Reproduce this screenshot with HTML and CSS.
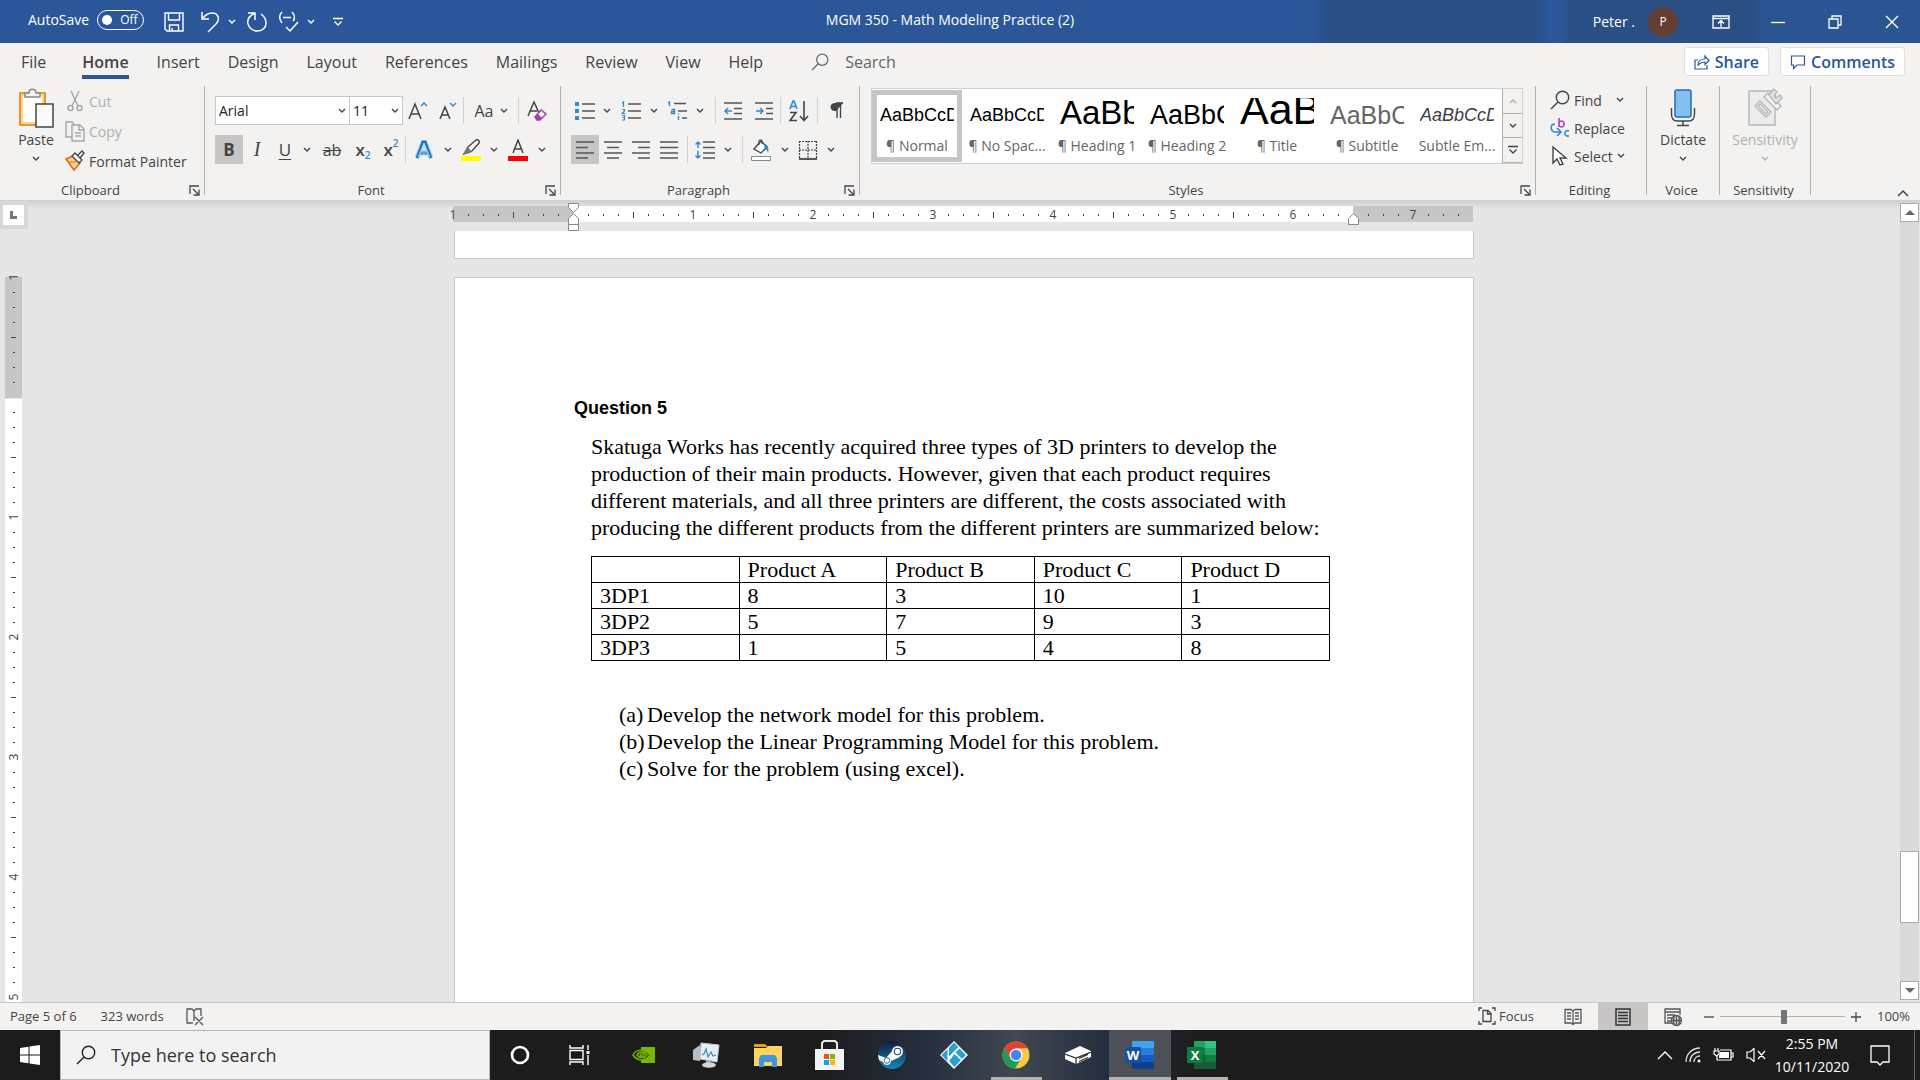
FILE: index.html
```html
<!DOCTYPE html>
<html lang="en">
<head>
<meta charset="utf-8">
<title>MGM 350 - Math Modeling Practice (2)</title>
<link rel="stylesheet" href="styles.css">
</head>
<body>
<svg class="defs" aria-hidden="true">
  <symbol id="chev" viewBox="0 0 8 6"><path d="M1 1l3 3 3-3" fill="none" stroke="currentColor" stroke-width="1.4"/></symbol>
  <symbol id="launch" viewBox="0 0 11 11"><path d="M1 9V1h9M4 4l5 5M10 4.500V10H4.500" fill="none" stroke="currentColor" stroke-width="1.300"/></symbol>
  <symbol id="lens" viewBox="0 0 20 20"><circle cx="12.500" cy="7.500" r="6.200" fill="none" stroke="currentColor" stroke-width="1.400"/><path d="M8 12L1 19" stroke="currentColor" stroke-width="1.400"/></symbol>
  <symbol id="more" viewBox="0 0 10 10"><path d="M0 1.500h10M1.500 4.500L5 8l3.500-3.500" fill="none" stroke="currentColor" stroke-width="1.300"/></symbol>
</svg>

<header class="titlebar">
  <div class="quick">
    <label class="autosave">AutoSave <span class="pill"><input type="checkbox" class="knob"><span>Off</span></span></label>
    <button class="qb save" aria-label="Save"><svg width="20" height="20" viewBox="0 0 20 20" fill="none" stroke="#fff" stroke-width="1.400"><path d="M1 1h18v18H3l-2-2zM4.500 1v7h11V1M5.500 19v-6h9v6M8 19v-3"/></svg></button>
    <button class="qb undo" aria-label="Undo"><svg width="20" height="22" viewBox="0 0 20 22" fill="none" stroke="#fff" stroke-width="1.500"><path d="M2 1v7h7M2 8C6 3 9 2 12 2c7 0 8 7 4 11l-8 8"/></svg><svg class="chev"><use href="#chev"/></svg></button>
    <button class="qb redo" aria-label="Repeat"><svg width="22" height="22" viewBox="0 0 22 22" fill="none" stroke="#fff" stroke-width="1.500"><path d="M2 2h7v7M9 2C3 5 1 9 2 13c3 10 18 9 18-1 0-4-2-7-5-9"/></svg></button>
    <button class="qb spell" aria-label="Spelling"><svg width="21" height="22" viewBox="0 0 21 22" fill="none" stroke="#fff" stroke-width="1.500"><path d="M4 1C1 4 1 8 4 12M5 6.500h8M14 1c3 3 3 7 1 9M8 16l4 4 8-9"/></svg><svg class="chev"><use href="#chev"/></svg></button>
    <button class="qb" aria-label="Customize toolbar"><svg width="10" height="10"><use href="#more"/></svg></button>
  </div>
  <div class="doc-title">MGM 350 - Math Modeling Practice (2)</div>
  <div class="account">
    <span>Peter .</span><span class="avatar">P</span>
    <button class="wb" aria-label="Ribbon display options"><svg width="18" height="14" viewBox="0 0 18 14" fill="none" stroke="#fff" stroke-width="1.300"><path d="M1 1h16v12H1zM1 3.500h16M9 12V6M6 8.500l3-3 3 3"/></svg></button>
    <button class="wb" aria-label="Minimize"><svg width="14" height="14"><path d="M0 7.500h14" stroke="#fff" stroke-width="1.300"/></svg></button>
    <button class="wb" aria-label="Restore"><svg width="14" height="14" viewBox="0 0 14 14" fill="none" stroke="#fff" stroke-width="1.300"><path d="M1 4h9v9H1zM4 4V1h9v9h-3"/></svg></button>
    <button class="wb" aria-label="Close"><svg width="14" height="14" viewBox="0 0 14 14" stroke="#fff" stroke-width="1.400"><path d="M1 1l12 12M13 1L1 13"/></svg></button>
  </div>
</header>

<nav class="tabs">
  <a href="#file" class="file">File</a>
  <a href="#home" class="on">Home</a>
  <a href="#insert">Insert</a>
  <a href="#design">Design</a>
  <a href="#layout">Layout</a>
  <a href="#references">References</a>
  <a href="#mailings">Mailings</a>
  <a href="#review">Review</a>
  <a href="#view">View</a>
  <a href="#help">Help</a>
  <label class="tell"><svg width="18" height="18"><use href="#lens"/></svg><input type="text" placeholder="Search" aria-label="Search"></label>
  <button class="pillbtn"><svg width="16" height="16" viewBox="0 0 16 16" fill="none" stroke="currentColor" stroke-width="1.200"><path d="M4 6H1v9h12v-4M4 11c0-4 3-6 7-6V2l4 4.500-4 4V8C8 8 6 9 4 11z"/></svg>Share</button>
  <button class="pillbtn"><svg width="16" height="16" viewBox="0 0 16 16" fill="none" stroke="currentColor" stroke-width="1.200"><path d="M1.500 2h13v9H7l-3.500 3.500V11h-2z"/></svg>Comments</button>
</nav>

<section class="ribbon" aria-label="Home tools">
  <div class="group clipboard">
    <div class="body">
      <button class="big"><svg width="36" height="40" viewBox="0 0 36 40"><path d="M2 5h25v32H2z" fill="#fcd58a" stroke="#e67e14" stroke-width="1.600"/><path d="M5 8h19v26H5z" fill="#fff"/><path d="M7 9V5h4c0-5 7-5 7 0h4v4z" fill="#f3f2f1" stroke="#8a8886" stroke-width="1.400"/><path d="M18 16h17v23H18z" fill="#fafafa" stroke="#444" stroke-width="1.500"/></svg>Paste<svg class="chev"><use href="#chev"/></svg></button>
      <div class="stack">
        <button class="row off"><svg width="20" height="22" viewBox="0 0 20 22" fill="none" stroke="#a6a6a6" stroke-width="1.400"><path d="M6 1l7 15M14 1L7 16"/><circle cx="5.500" cy="18" r="2.500"/><circle cx="14.500" cy="18" r="2.500"/></svg>Cut</button>
        <button class="row off"><svg width="20" height="22" viewBox="0 0 20 22" fill="none" stroke="#a6a6a6" stroke-width="1.400"><path d="M7 17H1V2h6l3 3M7 5h8l4 4v12H7zM14 5v5h5M10 13h6M10 16h6"/></svg>Copy</button>
        <button class="row"><svg width="20" height="22" viewBox="0 0 20 22"><path d="M1 9l7-3 7 7-6 7z" fill="#fcd58a" stroke="#e0661a" stroke-width="1.500"/><path d="M3 12l8 0" stroke="#e0661a"/><path d="M7 6l3-3 7 7-3 3zM13 5l4-4 2 2-4 5" fill="#fff" stroke="#444" stroke-width="1.400"/></svg>Format Painter</button>
      </div>
    </div>
    <div class="cap"><span>Clipboard</span><button aria-label="Clipboard options"><svg width="11" height="11"><use href="#launch"/></svg></button></div>
  </div>

  <div class="group font">
    <div class="body lines">
      <div class="line">
        <span class="combo name"><select aria-label="Font"><option>Arial</option></select><svg class="chev"><use href="#chev"/></svg></span>
        <span class="combo size"><select aria-label="Font size"><option>11</option></select><svg class="chev"><use href="#chev"/></svg></span>
        <button class="ib w30" aria-label="Grow font"><svg width="20" height="20" viewBox="0 0 20 20" fill="none" stroke="#444" stroke-width="1.500"><path d="M1 18L7 3l6 15M3 13h8"/><path d="M13 5l3-3 3 3" stroke="#2b8dd6"/></svg></button>
        <button class="ib w30" aria-label="Shrink font"><svg width="18" height="20" viewBox="0 0 18 20" fill="none" stroke="#444" stroke-width="1.500"><path d="M1 18L6 6l5 12M3 14h6"/><path d="M11 2l3 3 3-3" stroke="#2b8dd6"/></svg></button>
        <i class="sep"></i>
        <button class="ib w54 case" aria-label="Change case">Aa<svg class="chev"><use href="#chev"/></svg></button>
        <i class="sep"></i>
        <button class="ib w36" aria-label="Clear formatting"><svg width="20" height="20" viewBox="0 0 20 20" fill="none" stroke="#444" stroke-width="1.500"><path d="M1 15L7 1l5 11M3 10h7"/><path d="M8 16l6-7 5 4-6 6h-3z" fill="#f3f2f1" stroke="#a33fae"/><path d="M8 16l3-3 4 4-2 2h-3z" fill="#a33fae" stroke="none"/></svg></button>
      </div>
      <div class="line">
        <button class="ib w28 pressed b">B</button>
        <button class="ib w28 it">I</button>
        <button class="ib w28 un">U</button>
        <button class="ib w16" aria-label="Underline style"><svg class="chev"><use href="#chev"/></svg></button>
        <button class="ib w34 st">ab</button>
        <button class="ib w28 sb">x<sub>2</sub></button>
        <button class="ib w28 sb">x<sup>2</sup></button>
        <i class="sep"></i>
        <button class="ib w36" aria-label="Text effects"><svg width="20" height="20" viewBox="0 0 20 20" fill="none"><path d="M3 18L9 2h2l6 16M6 13h8" stroke="#9fd0f2" stroke-width="5"/><path d="M3 18L9 2h2l6 16M6 13h8" stroke="#1668b8" stroke-width="2.500"/><path d="M4 17L10 3l6 14M6 13h8" stroke="#fff" stroke-width=".7"/></svg></button>
        <button class="ib w12" aria-label="Effects menu"><svg class="chev"><use href="#chev"/></svg></button>
        <button class="ib w34" aria-label="Highlight"><svg width="20" height="22" viewBox="0 0 20 22"><path d="M3 15l4-7 8-7c2-1 4 1 3 3l-7 8z" fill="#fff" stroke="#444" stroke-width="1.400"/><path d="M2 15l5-7 4 5-5 2z" fill="#777"/><path d="M0 17h20v5H0z" fill="#ff0"/></svg></button>
        <button class="ib w12" aria-label="Highlight colors"><svg class="chev"><use href="#chev"/></svg></button>
        <button class="ib w36" aria-label="Font color"><svg width="20" height="22" viewBox="0 0 20 22"><path d="M5 14L10 1l5 13M6.500 10h7" fill="none" stroke="#444" stroke-width="1.500"/><path d="M0 17h20v5H0z" fill="#f00"/></svg></button>
        <button class="ib w12" aria-label="Font colors"><svg class="chev"><use href="#chev"/></svg></button>
      </div>
    </div>
    <div class="cap"><span>Font</span><button aria-label="Font options"><svg width="11" height="11"><use href="#launch"/></svg></button></div>
  </div>

  <div class="group para">
    <div class="body lines">
      <div class="line">
        <button class="ib w28" aria-label="Bullets"><svg width="20" height="20" viewBox="0 0 20 20"><path d="M0 1h4v4H0zM0 8h4v4H0zM0 15h4v4H0z" fill="#2b8dd6"/><path d="M7 3h13M7 10h13M7 17h13" stroke="#555" stroke-width="1.600"/></svg></button>
        <button class="ib w16" aria-label="Bullet library"><svg class="chev"><use href="#chev"/></svg></button>
        <button class="ib w32" aria-label="Numbering"><svg width="20" height="20" viewBox="0 0 20 20"><path d="M1 2l1.500-1v5M1 8.500h2.500v1.500L1 12.500h3M1 14.500h2.500v4.500H1M1.500 16.500h2" fill="none" stroke="#2b8dd6" stroke-width="1.200"/><path d="M7 3h13M7 10h13M7 17h13" stroke="#555" stroke-width="1.600"/></svg></button>
        <button class="ib w14" aria-label="Numbering library"><svg class="chev"><use href="#chev"/></svg></button>
        <button class="ib w32" aria-label="Multilevel list"><svg width="20" height="20" viewBox="0 0 20 20"><path d="M1 2l1.500-1v4M4.500 8.500h3v4h-3v-2h3M11.500 15v4M11.500 12.500v1" fill="none" stroke="#2b8dd6" stroke-width="1.400"/><path d="M7 2.500h12M11 10h9M15 17h5" stroke="#555" stroke-width="1.600"/></svg></button>
        <button class="ib w14" aria-label="List styles"><svg class="chev"><use href="#chev"/></svg></button>
        <i class="sep wide"></i>
        <button class="ib w32" aria-label="Decrease indent"><svg width="19" height="20" viewBox="0 0 19 20" fill="none"><path d="M1 2h18M11 7.500h8M11 12.500h8M1 18h18" stroke="#555" stroke-width="1.600"/><path d="M9 10H2M5 7l-3 3 3 3" stroke="#2b8dd6" stroke-width="1.500"/></svg></button>
        <button class="ib w32" aria-label="Increase indent"><svg width="19" height="20" viewBox="0 0 19 20" fill="none"><path d="M0 2h18M11 7.500h7M11 12.500h7M0 18h18" stroke="#555" stroke-width="1.600"/><path d="M1 10h7M5 7l3 3-3 3" stroke="#2b8dd6" stroke-width="1.500"/></svg></button>
        <i class="sep"></i>
        <button class="ib w36" aria-label="Sort"><svg width="20" height="22" viewBox="0 0 20 22" fill="none" stroke-width="1.600"><path d="M1 9l3-8h1l3 8M2 6.500h5" stroke="#2b8dd6"/><path d="M1 12.500h6l-6 8h7M15 1v19M11 16l4 4.500 4-4.500" stroke="#444"/></svg></button>
        <i class="sep"></i>
        <button class="ib w36" aria-label="Show paragraph marks"><svg width="13" height="17" viewBox="0 0 13 17"><path d="M13 1H5C-1 1-1 9 5 9h1" fill="#444"/><path d="M6 1h7M7 1v15M10.500 1v15" stroke="#444" stroke-width="1.400"/></svg></button>
      </div>
      <div class="line">
        <button class="ib w28 pressed" aria-label="Align left"><svg width="18" height="18"><path d="M0 1h18M0 6.500h12M0 12h18M0 17h12" stroke="#555" stroke-width="1.600"/></svg></button>
        <button class="ib w28" aria-label="Center"><svg width="18" height="18"><path d="M0 1h18M3 6.500h12M0 12h18M3 17h12" stroke="#555" stroke-width="1.600"/></svg></button>
        <button class="ib w28" aria-label="Align right"><svg width="18" height="18"><path d="M0 1h18M6 6.500h12M0 12h18M6 17h12" stroke="#555" stroke-width="1.600"/></svg></button>
        <button class="ib w28" aria-label="Justify"><svg width="18" height="18"><path d="M0 1h18M0 6.500h18M0 12h18M0 17h18" stroke="#555" stroke-width="1.600"/></svg></button>
        <i class="sep mid"></i>
        <button class="ib w34" aria-label="Line spacing"><svg width="20" height="20" viewBox="0 0 20 20" fill="none"><path d="M8 2h12M8 7.500h12M8 13h12M8 18h12" stroke="#555" stroke-width="1.600"/><path d="M3 8V2M.5 4.500L3 2l2.500 2.500M3 11v7M.5 15.500L3 18l2.500-2.500" stroke="#2b8dd6" stroke-width="1.500"/></svg></button>
        <button class="ib w12" aria-label="Spacing menu"><svg class="chev"><use href="#chev"/></svg></button>
        <i class="sep wide"></i>
        <button class="ib w36" aria-label="Shading"><svg width="20" height="22" viewBox="0 0 20 22"><path d="M3 10l7-8 6 6-6 6z" fill="#fff" stroke="#444" stroke-width="1.400"/><path d="M8 6V1h3v4" fill="none" stroke="#444"/><path d="M14 5c3 1 4 4 3 9-1-3-2-4-4-6z" fill="#2b8dd6"/><path d="M.5 17.500h19v4H.5z" fill="#fff" stroke="#888"/></svg></button>
        <button class="ib w12" aria-label="Shading colors"><svg class="chev"><use href="#chev"/></svg></button>
        <button class="ib w34" aria-label="Borders"><svg width="20" height="20" viewBox="0 0 20 20" fill="none" stroke="#444"><path d="M1.500 1v17M18.500 1v17M10 1v17M1 1.500h18M1 10h18" stroke-width="1.200" stroke-dasharray="2 1"/><path d="M1 19h18" stroke-width="1.800"/></svg></button>
        <button class="ib w12" aria-label="Border types"><svg class="chev"><use href="#chev"/></svg></button>
      </div>
    </div>
    <div class="cap"><span>Paragraph</span><button aria-label="Paragraph options"><svg width="11" height="11"><use href="#launch"/></svg></button></div>
  </div>

  <div class="group styles">
    <div class="body">
      <div class="gallery">
        <button class="style sel"><span class="smp">AaBbCcD</span><span class="nm">¶ Normal</span></button>
        <button class="style"><span class="smp">AaBbCcD</span><span class="nm">¶ No Spac...</span></button>
        <button class="style"><span class="smp h1">AaBb</span><span class="nm">¶ Heading 1</span></button>
        <button class="style"><span class="smp h2">AaBbC</span><span class="nm">¶ Heading 2</span></button>
        <button class="style"><span class="smp ti">AaB</span><span class="nm">¶ Title</span></button>
        <button class="style"><span class="smp su">AaBbC</span><span class="nm">¶ Subtitle</span></button>
        <button class="style"><span class="smp em">AaBbCcD</span><span class="nm">Subtle Em...</span></button>
        <div class="spin">
          <button class="dim" aria-label="Previous styles"><svg class="chev up"><use href="#chev"/></svg></button>
          <button aria-label="Next styles"><svg class="chev"><use href="#chev"/></svg></button>
          <button aria-label="More styles"><svg width="10" height="10"><use href="#more"/></svg></button>
        </div>
      </div>
    </div>
    <div class="cap"><span>Styles</span><button aria-label="Style options"><svg width="11" height="11"><use href="#launch"/></svg></button></div>
  </div>

  <div class="group editing">
    <div class="body stack">
      <button class="row"><svg width="20" height="20"><use href="#lens"/></svg>Find<svg class="chev far"><use href="#chev"/></svg></button>
      <button class="row"><svg width="20" height="22" viewBox="0 0 20 22" fill="none" stroke-width="1.600"><path d="M9 1v9M9 7c0-4 5-4 5 0s-5 4-5 0" stroke="#b146c2"/><path d="M5 7c-5 0-5 7 0 8h5M7 11l4 4-4 4M19 14c-5-2-6 6 0 5" stroke="#2b8dd6"/></svg>Replace</button>
      <button class="row"><svg width="20" height="22" viewBox="0 0 20 22"><path d="M3 2v16l4-4 3 6 3-1-3-6h6z" fill="#fff" stroke="#444" stroke-width="1.400"/></svg>Select<svg class="chev"><use href="#chev"/></svg></button>
    </div>
    <div class="cap"><span>Editing</span></div>
  </div>

  <div class="group voice">
    <div class="body">
      <button class="big"><svg width="26" height="40" viewBox="0 0 26 40"><rect x="5" y="2" width="16" height="27" rx="2" fill="#83beec" stroke="#1e6fb8" stroke-width="1.500"/><path d="M1.500 20v6c0 5 3 7 6 7h11c3 0 6-2 6-7v-6M13 33v4M7 37.500h12" fill="none" stroke="#444" stroke-width="1.400"/></svg>Dictate<svg class="chev"><use href="#chev"/></svg></button>
    </div>
    <div class="cap"><span>Voice</span></div>
  </div>

  <div class="group sens">
    <div class="body">
      <button class="big off"><svg width="36" height="40" viewBox="0 0 36 40" stroke="#b8b6b4" stroke-width="1.400"><path d="M2 3h26v34H2z" fill="#ececec"/><path d="M8 18l5-5 11 11-5 5z" fill="#f3f2f1"/><path d="M11 18l2-2 8 8-2 2zM17 9l4-4 13 13-4 4z" fill="#f3f2f1"/><path d="M22 7l5-6 3 3-3 4 2 2 4-3 2 3-6 6z" fill="#e4e4e4"/></svg>Sensitivity<svg class="chev"><use href="#chev"/></svg></button>
    </div>
    <div class="cap"><span>Sensitivity</span></div>
  </div>
  <button class="collapse" aria-label="Collapse ribbon"><svg width="12" height="8" viewBox="0 0 12 8"><path d="M1 7l5-5 5 5" fill="none" stroke="#444" stroke-width="1.500"/></svg></button>
</section>

<main class="work">
  <div class="left">
    <button class="tabstop" aria-label="Tab selector"><svg width="7" height="8"><path d="M0 0h3v5h4v3H0z" fill="#777"/></svg></button>
    <div class="vruler"><svg id="vr" width="17" height="727" aria-hidden="true"></svg></div>
  </div>
  <div class="center">
    <svg id="hr" class="hruler" width="1036" height="30" viewBox="0 1 1036 30" aria-hidden="true"></svg>
    <div class="view">
      <div class="page prev"></div>
      <article class="page">
        <h1>Question 5</h1>
        <div class="excerpt">
          <p>Skatuga Works has recently acquired three types of 3D printers to develop the production of their main products. However, given that each product requires different materials, and all three printers are different, the costs associated with producing the different products from the different printers are summarized below:</p>
          <table>
            <tr><th></th><th>Product A</th><th>Product B</th><th>Product C</th><th>Product D</th></tr>
            <tr><td>3DP1</td><td>8</td><td>3</td><td>10</td><td>1</td></tr>
            <tr><td>3DP2</td><td>5</td><td>7</td><td>9</td><td>3</td></tr>
            <tr><td>3DP3</td><td>1</td><td>5</td><td>4</td><td>8</td></tr>
          </table>
          <ul>
            <li><span>(a)</span>Develop the network model for this problem.</li>
            <li><span>(b)</span>Develop the Linear Programming Model for this problem.</li>
            <li><span>(c)</span>Solve for the problem (using excel).</li>
          </ul>
        </div>
      </article>
    </div>
  </div>
  <div class="scroll">
    <button aria-label="Scroll up"><svg width="10" height="5"><path d="M0 5l5-5 5 5z" fill="#666"/></svg></button>
    <div class="track"><div class="thumb"></div></div>
    <button aria-label="Scroll down"><svg width="10" height="5"><path d="M0 0l5 5 5-5z" fill="#666"/></svg></button>
  </div>
</main>

<footer class="status">
  <span class="pages">Page 5 of 6</span><span class="words">323 words</span>
  <svg width="18" height="18" viewBox="0 0 18 18" fill="none" stroke="#555" stroke-width="1.300"><path d="M7 15H1V1h5l2 2v10M8 3l2-2h5v7M9 9l8 8M17 9l-8 8"/></svg>
  <button class="focus"><svg width="18" height="18" viewBox="0 0 18 18" fill="none" stroke="#444" stroke-width="1.300"><path d="M4 1H1v3M1 14v3h3M14 1h3v3M17 14v3h-3M5 3.500h5l3 3v8H5zM9.500 3.500v3.500H13"/></svg>Focus</button>
  <button class="vb" aria-label="Read mode"><svg width="18" height="18" viewBox="0 0 18 18" fill="none" stroke="#555" stroke-width="1.300"><path d="M9 3L7 1.500H1V15h6l2 1.500L11 15h6V1.500h-6zM9 3v13M3 5h4M3 8h4M3 11h4M11 5h4M11 8h4M11 11h4"/></svg></button>
  <button class="vb pressed" aria-label="Print layout"><svg width="16" height="18" viewBox="0 0 16 18" fill="none" stroke="#333" stroke-width="1.500"><path d="M1 1h14v16H1zM3 4.500h10M3 7.500h10M3 10.500h10M3 13.500h10"/></svg></button>
  <button class="vb" aria-label="Web layout"><svg width="18" height="18" viewBox="0 0 18 18" fill="none" stroke="#555" stroke-width="1.300"><path d="M8 15H1V1h15v6M1 4h15M3 7h8M3 10h5M3 13h4"/><circle cx="12.500" cy="12.500" r="5" fill="#ddd"/><path d="M7.500 12.500h10M12.500 7.500v10M10.500 8.500c-1.500 3-1.500 5 0 8M14.500 8.500c1.500 3 1.500 5 0 8"/></svg></button>
  <button class="zb" aria-label="Zoom out"><svg width="10" height="10"><path d="M0 5h10" stroke="#444" stroke-width="1.300"/></svg></button>
  <input type="range" class="zoom" min="0" max="200" value="102" aria-label="Zoom">
  <button class="zb" aria-label="Zoom in"><svg width="10" height="10"><path d="M0 5h10M5 0v10" stroke="#444" stroke-width="1.300"/></svg></button>
  <span class="pct">100%</span>
</footer>

<div class="taskbar">
  <button class="start" aria-label="Start"><svg width="20" height="20" viewBox="0 0 20 20" fill="#fff"><path d="M0 3l8.500-1.200v7.700H0zM9.500 1.600L20 0v9.500H9.500zM0 10.500h8.500v7.700L0 17zM9.500 10.500H20V20L9.500 18.400z"/></svg></button>
  <label class="find"><svg width="20" height="20"><use href="#lens"/></svg><input type="text" placeholder="Type here to search" aria-label="Type here to search"></label>
  <button class="tb sys" aria-label="Cortana"><svg width="20" height="20"><circle cx="10" cy="10" r="8" fill="none" stroke="#fff" stroke-width="2.600"/></svg></button>
  <button class="tb sys" aria-label="Task view"><svg width="22" height="20" viewBox="0 0 22 20" fill="none" stroke="#fff" stroke-width="1.400"><path d="M1 0v3h13V0M1 5.500h13v9H1zM1 20v-3h13v3M19 0v5M19 10v10"/><path d="M17.500 6h3v3h-3z" fill="#fff" stroke="none"/></svg></button>
  <div class="apps">
    <button class="tb" aria-label="NVIDIA"><svg width="24" height="18" viewBox="0 0 24 18"><path d="M9 1h14v16H9z" fill="#76b900"/><path d="M1 9c3-6 11-7 17 0-5 7-13 6-17 0z" fill="#1c2a08"/><path d="M1 9c3-6 11-7 17 0-5 7-13 6-17 0zM5 9c2-4 7-4 10 0-3 4-8 3-10 0zM8 9c1-2 4-1 4 0s-3 2-4 0z" fill="none" stroke="#76b900" stroke-width="1.400"/></svg></button>
    <button class="tb" aria-label="Resource monitor"><svg width="28" height="26" viewBox="0 0 28 26"><path d="M1 8l7-5v16l-7-1z" fill="#b8bcc0"/><path d="M9 1l18 2-2 17-17-3z" fill="#e8eef2" stroke="#c4c8cc" stroke-width="1"/><path d="M10 13l2-1 2-5 2 8 3-5 2 4 3-1" fill="none" stroke="#3b8dbd" stroke-width="1.200"/><path d="M14 18h5v4h-5z" fill="#aaa"/><ellipse cx="17" cy="23" rx="7" ry="2.800" fill="#d4d6d8"/></svg></button>
    <button class="tb" aria-label="File Explorer"><svg width="28" height="24" viewBox="0 0 28 24"><path d="M0 1h11l3 3H0z" fill="#e8a010"/><path d="M0 5l12 0 2-2h14v20H0z" fill="#ffd35e"/><path d="M5 24V15l2-3h14l2 3v9h-5v-5h-8v5z" fill="#3d97dd"/></svg></button>
    <button class="tb" aria-label="Microsoft Store"><svg width="30" height="30" viewBox="0 0 30 30"><path d="M7 10V3l2-2h11l2 2v7" fill="none" stroke="#e8e8e8" stroke-width="2"/><path d="M0 9h29v21H0z" fill="#f3f3f3"/><path d="M9 14h5v5H9z" fill="#f25022"/><path d="M15 14h5v5h-5z" fill="#7fba00"/><path d="M9 20h5v5H9z" fill="#00a4ef"/><path d="M15 20h5v5h-5z" fill="#ffb900"/></svg></button>
    <button class="tb" aria-label="Steam"><svg width="28" height="28" viewBox="0 0 28 28"><defs><linearGradient id="steam" x2="0" y2="1"><stop stop-color="#151a3a"/><stop offset="1" stop-color="#1389b8"/></linearGradient></defs><circle cx="14" cy="14" r="14" fill="url(#steam)"/><path d="M0 14l8 3 7-8 7 7-9 4c0 5-7 5-8 1l-4-2z" fill="#fff"/><circle cx="19.500" cy="10.500" r="5.500" fill="#fff"/><circle cx="19.500" cy="10.500" r="3.800" fill="#1b4a7a"/><circle cx="19.500" cy="10.500" r="2.700" fill="#fff"/><circle cx="9" cy="19.500" r="2.800" fill="none" stroke="#1577a5"/></svg></button>
    <button class="tb" aria-label="Kodi"><svg width="28" height="28" viewBox="0 0 28 28"><path d="M14 0l14 14-14 14L0 14z" fill="#fff"/><path d="M14 1.500l4.500 4.500L9 15.500V6.500zM7.500 8v12.500L1.500 14zM19.500 7.500l6.500 6.500-4 4-6.500-6.500zM14.500 13l6.500 6-6.500 7-5.500-6z" fill="#2a9fd0"/></svg></button>
    <button class="tb run" aria-label="Chrome"><svg width="28" height="28" viewBox="0 0 28 28"><circle cx="14" cy="14" r="13.500" fill="#fbc843"/><path d="M2.300 7.300A13.500 13.500 0 0 1 25.700 7.300H14l-6 10z" fill="#db4437"/><path d="M2.300 7.300A13.500 13.500 0 0 0 13 27.500l6-10H8.500z" fill="#1a9d58"/><circle cx="14" cy="14" r="6.500" fill="#fff"/><circle cx="14" cy="14" r="5.200" fill="#4285f4"/></svg></button>
    <button class="tb" aria-label="Drive"><svg width="26" height="20" viewBox="0 0 26 20"><path d="M0 8L15 1l11 5v6l-15 7-11-5z" fill="#fff"/><path d="M0 9l11 4 15-6M11 13v6M14 16.500l9-4M14 13.500l9-4" fill="none" stroke="#333" stroke-width="1.300"/></svg></button>
    <button class="tb run active" aria-label="Word"><svg width="30" height="28" viewBox="0 0 30 28"><path d="M8 0h20a1 1 0 0 1 1 1v6H7V1z" fill="#41a5ee"/><path d="M7 7h22v7H7z" fill="#2b7cd3"/><path d="M7 14h22v7H7z" fill="#185abd"/><path d="M7 21h22v6a1 1 0 0 1-1 1H8l-1-1z" fill="#103f91"/><rect y="6" width="16" height="16" rx="1" fill="#1550a8"/><text x="8" y="19" text-anchor="middle" class="glyph">W</text></svg></button>
    <button class="tb run" aria-label="Excel"><svg width="30" height="28" viewBox="0 0 30 28"><path d="M7 0h11v7H7z" fill="#21a366"/><path d="M18 0h11v7H18z" fill="#33c481"/><path d="M7 7h11v7H7z" fill="#107c41"/><path d="M18 7h11v7H18z" fill="#21a366"/><path d="M7 14h22v14H7z" fill="#185c37"/><path d="M18 14h11v7H18z" fill="#107c41"/><rect y="6" width="16" height="16" rx="1" fill="#107c41"/><text x="8" y="19" text-anchor="middle" class="glyph">X</text></svg></button>
  </div>
  <div class="tray">
    <button aria-label="Hidden icons"><svg width="16" height="10" viewBox="0 0 16 10"><path d="M1 9l7-7 7 7" fill="none" stroke="#fff" stroke-width="1.400"/></svg></button>
    <button aria-label="Network"><svg width="16" height="16" viewBox="0 0 16 16" fill="none" stroke="#ddd" stroke-width="1.300"><path d="M1 15C1 7 7 1 15 1M5 15c0-6 4-10 10-10M9 15c0-3 2-6 6-6"/><circle cx="14" cy="14" r="1.500" fill="#fff" stroke="none"/></svg></button>
    <button aria-label="Battery"><svg width="21" height="14" viewBox="0 0 21 14" fill="none" stroke="#fff" stroke-width="1.200"><path d="M7 2h11v10H4V8M18 5h2v4h-2M1 3h5v3L3.500 8 1 6zM2 3V0M5 3V0"/><path d="M7 4h9v6H6V8z" fill="#fff" stroke="none"/></svg></button>
    <button aria-label="Volume muted"><svg width="20" height="14" viewBox="0 0 20 14" fill="none" stroke="#fff" stroke-width="1.200"><path d="M1 4h3l4-3.500v13L4 10H1zM12 3l7 8M19 3l-7 8"/></svg></button>
    <button class="clock"><span>2:55 PM</span><span>10/11/2020</span></button>
    <button class="note" aria-label="Notifications"><svg width="20" height="21" viewBox="0 0 20 21"><path d="M1 1h18v16h-6l-3 3-3-3H1z" fill="none" stroke="#fff" stroke-width="1.300"/></svg></button>
  </div>
</div>
<script src="rulers.js"></script>
</body>
</html>
```
FILE: styles.css
```css
* { box-sizing: border-box; }
body { margin: 0; height: 100vh; display: flex; flex-direction: column; overflow: hidden; font-family: "Open Sans", "Noto Sans", sans-serif; font-size: 14px; color: #444; background: #e6e6e6; }
button, input, select { font: inherit; color: inherit; border: 0; background: none; padding: 0; margin: 0; border-radius: 0; }
button { display: flex; align-items: center; justify-content: center; white-space: nowrap; }
svg { flex: none; display: block; }
.defs { position: absolute; width: 0; height: 0; }
.chev { width: 8px; height: 6px; }
.chev.up { transform: rotate(180deg); }

.titlebar { flex: none; height: 43px; display: grid; grid-template-columns: 1fr auto 1fr; align-items: center; color: #fff;
  background:
    radial-gradient(ellipse at 1825px 10px, #2b579a 30px, transparent 50px),
    linear-gradient(90deg, transparent 1310px, #2a4f85 1330px, #2a4f85 1535px, #2b579a 1550px, #2b579a 1560px, #2a4f85 1570px, #2a4f85 1750px, #2b5592 1765px) #2b579a; }
.quick { display: flex; align-items: center; padding-left: 28px; }
.autosave { display: flex; align-items: center; gap: 8px; padding-bottom: 4px; margin-right: 20px; }
.pill { display: flex; align-items: center; gap: 8px; width: 47px; height: 20px; border: 1px solid #fff; border-radius: 10px; padding-left: 4px; font-size: 12px; }
.knob { appearance: none; width: 10px; height: 10px; border-radius: 50%; background: #fff; }
.qb { gap: 8px; }
.save { margin-right: 16px; }
.undo { margin-right: 10px; }
.redo { margin-right: 10px; }
.spell { margin-right: 18px; }
.qb .chev { color: #fff; }
.doc-title { padding: 0 20px 4px 0; }
.account { display: flex; align-items: center; justify-content: flex-end; }
.avatar { width: 30px; height: 30px; border-radius: 50%; background: #633e32; display: grid; place-items: center; font-size: 12px; margin: 0 14px 0 13px; }
.wb { width: 57px; height: 30px; }

.tabs { flex: none; height: 43px; background: #f3f2f1; display: flex; align-items: flex-start; padding: 4px 15px 0 21px; gap: 28px; font-size: 16px; }
.tabs a { color: #444; text-decoration: none; height: 32px; line-height: 30px; }
.tabs .file { margin-right: 8px; }
.tabs .on { font-weight: 600; border-bottom: 4px solid #2b579a; }
.tell { display: flex; align-items: center; gap: 16px; flex: 1; height: 30px; margin-left: 20px; color: #666; }
.tell input { width: 120px; }
.tell input::placeholder { color: #666; opacity: 1; }
.pillbtn { height: 29px; gap: 5px; padding: 0 9px; background: #fff; border: 1px solid #e1dfdd; border-radius: 3px; color: #2b579a; font-weight: 600; }
.pillbtn + .pillbtn { margin-left: -17px; }

.ribbon { flex: none; height: 115px; background: #f3f2f1; display: flex; border-bottom: 1px solid #d2d0ce; }
.group { display: flex; flex-direction: column; height: 109px; border-right: 1px solid #b3b0ad; }
.body { flex: 1; display: flex; min-height: 0; }
.cap { display: flex; align-items: center; height: 18px; margin-bottom: -4px; font-size: 13px; padding-right: 3px; }
.cap span { flex: 1; text-align: center; }
.cap span:not(:last-child) { padding-right: 6px; }
.cap button { width: 14px; }
.clipboard { width: 205px; }
.font { width: 356px; }
.para { width: 299px; }
.styles { width: 676px; }
.styles .body { padding-left: 11px; }
.editing { width: 111px; }
.editing .body { padding-left: 14px; }
.voice { width: 73px; }
.sens { width: 91px; }
.voice .body, .sens .body { justify-content: center; }
.big { flex-direction: column; align-self: flex-start; padding-top: 2px; line-height: 24px; }
.big .chev { margin-top: 4px; }
.clipboard .big { padding-left: 18px; margin-right: 11px; }
.stack { display: flex; flex-direction: column; }
.row { height: 28px; gap: 4px; justify-content: flex-start; }
.off { color: #b1afad; }
.clipboard .row { height: 30px; }
.far { margin-left: 10px; }
.lines { flex-direction: column; gap: 10px; padding: 10px 0 0 10px; }
.line { display: flex; height: 29px; }
.ib { height: 29px; font-size: 17px; }
.w12 { width: 12px; } .w14 { width: 14px; } .w16 { width: 16px; } .w28 { width: 28px; } .w30 { width: 30px; }
.w32 { width: 32px; } .w34 { width: 34px; } .w36 { width: 36px; } .w54 { width: 54px; }
.sep { width: 1px; height: 27px; background: #d2d0ce; margin-top: 1px; }
.sep.mid { margin-left: 4px; }
.sep.wide { margin-left: 8px; }
.pressed { background: #c8c6c4; }
.case { gap: 6px; font-size: 16px; }
.b { font-weight: 700; }
.it { font-family: "Liberation Serif", serif; font-style: italic; font-size: 20px; }
.un { text-decoration: underline; text-underline-offset: 3px; }
.st { text-decoration: line-through; font-size: 16px; }
.sb { font-weight: 600; }
.sb sub, .sb sup { font-size: 10px; color: #2b8dd6; line-height: 10px; }
.sb sub { align-self: flex-end; padding-bottom: 4px; }
.sb sup { align-self: flex-start; padding-top: 3px; }
.combo { display: grid; align-items: center; background: #fff; border: 1px solid #c8c6c4; height: 29px; }
.combo > * { grid-area: 1 / 1; }
.combo select { appearance: none; width: 100%; height: 100%; padding-left: 3px; color: #222; outline: 0; }
.combo .chev { justify-self: end; margin-right: 3px; }
.name { width: 135px; margin-right: -1px; }
.size { width: 54px; }

.gallery { display: flex; height: 76px; margin-top: 2px; background: #fff; border: 1px solid #d2d0ce; }
.style { width: 90px; height: 74px; flex-direction: column; justify-content: flex-start; padding-top: 9px; }
.sel { border: 5px solid #c6c6c6; height: 72px; padding-top: 3px; margin-top: 1px; }
.smp { flex: none; width: 74px; height: 34px; line-height: 34px; overflow: hidden; text-align: left; font-family: "Liberation Sans", Arial, sans-serif; font-size: 18px; color: #000; }
.h1 { font-size: 33px; line-height: 30px; }
.h2 { font-size: 27px; }
.ti { font-size: 43px; line-height: 22px; }
.su { font-size: 25px; color: #666; }
.em { font-style: italic; color: #404040; }
.nm { flex: none; line-height: 28px; color: #666; }
.spin { width: 20px; display: flex; flex-direction: column; background: #f3f2f1; }
.spin button { flex: 1; border: 1px solid #b3b0ad; border-width: 0 0 1px 1px; }
.spin .dim { color: #b1afad; }
.collapse { align-self: flex-end; margin: 0 11px 3px auto; }

.work { flex: 1; min-height: 0; display: flex; background: linear-gradient(#d0d0d0, #e6e6e6 8px); }
.left { width: 26px; flex: none; }
.tabstop { width: 28px; height: 28px; border: 4px solid #d8d8d8; border-left-width: 3px; background: #fff; }
.vruler { margin: 48px 0 0 5px; }
.vruler svg { overflow: visible; }
.center { flex: 1; min-width: 0; display: flex; flex-direction: column; align-items: center; overflow: hidden; }
.hruler { flex: none; }
.rn { font-size: 12px; fill: #444; text-anchor: middle; }
.view { flex: 1; min-height: 0; overflow: hidden; width: 100%; display: flex; flex-direction: column; align-items: center; gap: 18px; padding-left: 2px; }
.page { flex: none; width: 1020px; min-height: 1320px; background: #fff; border: 1px solid #c6c6c6; padding: 118px 119px; color: #000; }
.prev { min-height: 28px; height: 28px; padding: 0; border-top: 0; }
h1 { margin: 0; font: bold 18px/24px "Liberation Sans", Arial, sans-serif; }
.excerpt { margin: 13px 0 0 17px; width: 739px; font: 22px/27px "Liberation Serif", "Times New Roman", serif; }
.excerpt p { margin: 0 0 15px; }
table { border-collapse: collapse; table-layout: fixed; width: 739px; line-height: 25px; }
th, td { border: 1px solid #000; padding: 0 8px; text-align: left; font-weight: 400; height: 26px; }
ul { list-style: none; margin: 40px 0 0 28px; padding: 0; }
li { display: flex; }
li span { width: 28px; }

.scroll { width: 20px; flex: none; padding: 2px 1px 2px 0; display: flex; flex-direction: column; }
.scroll button { width: 19px; height: 19px; background: #fff; border: 1px solid #ababab; }
.track { flex: 1; background: #dadada; display: flex; flex-direction: column; justify-content: flex-end; padding-bottom: 58px; }
.thumb { height: 72px; background: #fff; border: 1px solid #ababab; }

.status { flex: none; height: 28px; background: #f3f2f1; border-top: 1px solid #c6c6c6; display: flex; align-items: center; padding: 0 10px; font-size: 13px; }
.status > span, .focus { padding-bottom: 2px; }
.pages { margin-right: 24px; }
.words { margin-right: 22px; }
.focus { margin-left: auto; gap: 3px; margin-right: 14px; }
.vb { width: 50px; height: 27px; }
.zb { width: 10px; margin-left: 6px; }
.zoom { appearance: none; width: 125px; height: 15px; margin-left: 6px; background: linear-gradient(#b3b0ad, #b3b0ad) center / 100% 1px no-repeat; }
.zoom::-webkit-slider-thumb { appearance: none; width: 6px; height: 14px; background: #777; }
.pct { margin-left: 16px; }

.taskbar { flex: none; height: 50px; display: flex; background: linear-gradient(90deg, #1c1c1c 820px, #263040 930px, #404850 1015px, #263040 1100px, #1c1c1c 1200px) #1c1c1c; color: #fff; }
.start { width: 60px; }
.find { width: 430px; display: flex; align-items: center; gap: 15px; padding-left: 15px; background: #f2f2f2; border: 1px solid #b8b8b8; color: #222; font-size: 18px; }
.find input { flex: 1; min-width: 0; }
.find input::placeholder { color: #333; opacity: 1; }
.tb { width: 62px; height: 50px; }
.sys { width: 60px; }
.apps { display: flex; margin-left: 3px; }
.run { background: linear-gradient(#b5b1ad, #b5b1ad) bottom / 51px 3px no-repeat; }
.active { background: linear-gradient(#b5b1ad, #b5b1ad) bottom / 100% 3px no-repeat, #4e5258; }
.glyph { font: bold 13px "Open Sans", sans-serif; fill: #fff; }
.tray { margin-left: auto; display: flex; align-items: center; gap: 12px; margin-right: 5px; border-right: 1px solid #666; }
.clock { flex-direction: column; width: 78px; margin-left: -5px; line-height: 23px; }
.note { margin: 0 24px 0 7px; }
```
FILE: rulers.js
```js
// Draws the tick marks and inch numbers of both rulers (120px per inch).
const NS = "http://www.w3.org/2000/svg";
function add(svg, tag, attrs, text) {
  const el = document.createElementNS(NS, tag);
  for (const k in attrs) el.setAttribute(k, attrs[k]);
  if (text !== undefined) el.textContent = text;
  svg.appendChild(el);
}
const inch = 120, step = 15;

const hr = document.getElementById("hr");
const left = 8;
add(hr, "rect", { x: left, y: 6, width: 1020, height: 16, fill: "#c6c6c6" });
add(hr, "rect", { x: left + 120, y: 6, width: 780, height: 16, fill: "#fff" });
for (let i = -8; i < 60; i++) {
  const x = left + inch + i * step;
  if (i === 0 || i === 52) continue;
  if (i % 8 === 0) add(hr, "text", { x, y: 19, class: "rn" }, Math.abs(i / 8));
  else if (i % 4 === 0) add(hr, "rect", { x, y: 12, width: 1, height: 6, fill: "#444" });
  else add(hr, "rect", { x, y: 14, width: 1, height: 2, fill: "#444" });
}
const marker = { fill: "#fff", stroke: "#888" };
add(hr, "path", { d: "M123.500 3.500h10v4l-5 5-5-5z", ...marker });
add(hr, "path", { d: "M123.500 24.500v-6l5-5 5 5v6zM123.500 24.500h10v6h-10z", ...marker });
add(hr, "path", { d: "M903.500 24.500v-6l5-5 5 5v6z", ...marker });

const vr = document.getElementById("vr");
add(vr, "rect", { x: 0, y: 0, width: 17, height: 121, fill: "#c6c6c6" });
add(vr, "rect", { x: 0, y: 122, width: 17, height: 605, fill: "#fff" });
for (let i = -8; i <= 40; i++) {
  const y = 120 + i * step;
  if (i === 0) continue;
  if (i % 8 === 0) add(vr, "text", { x: 0, y: 0, class: "rn", transform: `translate(13 ${y}) rotate(-90)` }, Math.abs(i / 8));
  else if (i % 4 === 0) add(vr, "rect", { x: 6, y, width: 5, height: 1, fill: "#444" });
  else add(vr, "rect", { x: 8, y, width: 2, height: 1, fill: "#444" });
}
```
